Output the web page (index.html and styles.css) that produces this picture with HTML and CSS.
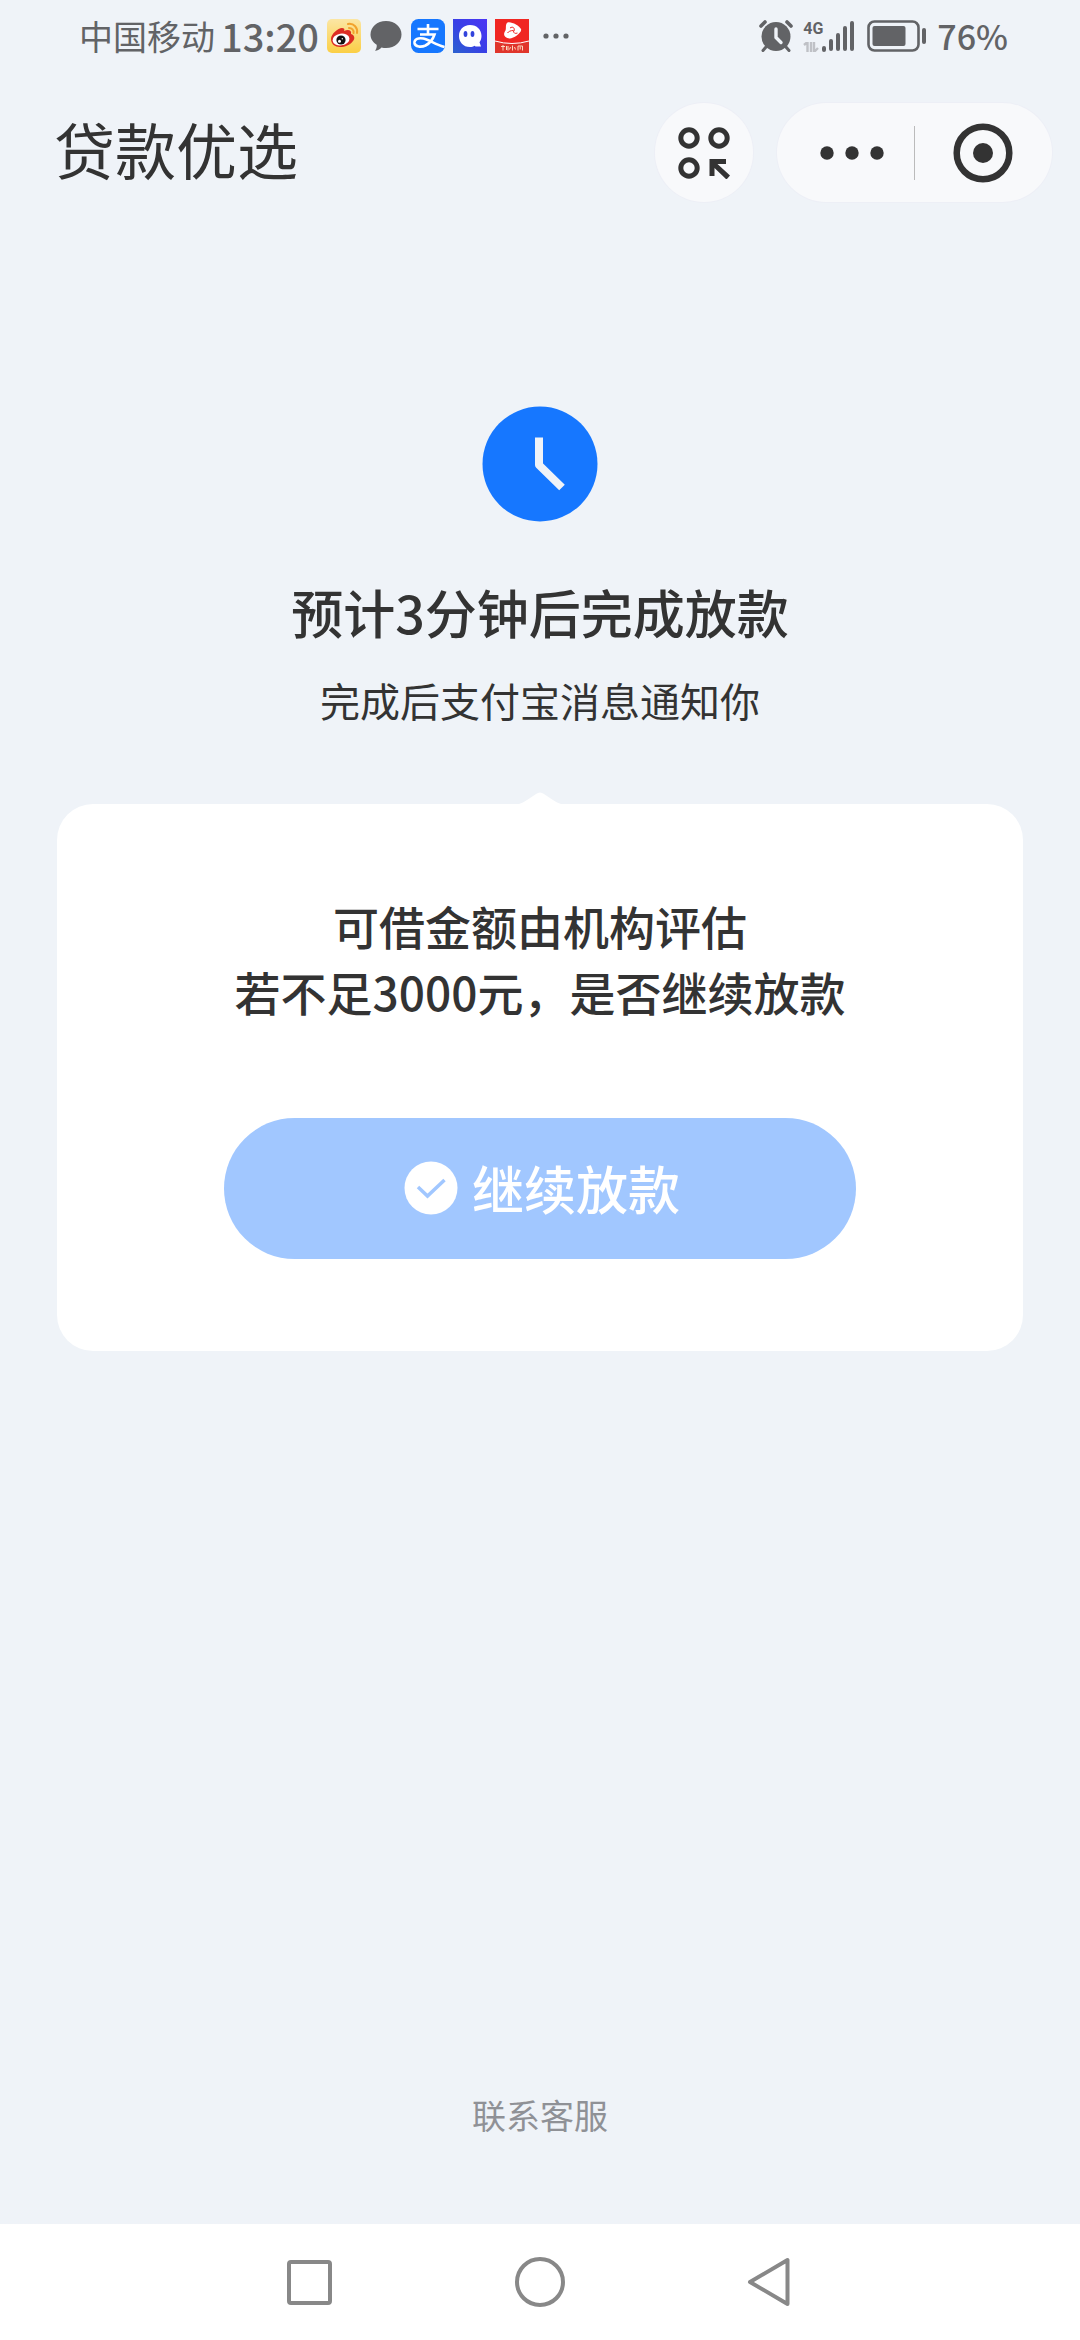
FILE: index.html
```html
<!DOCTYPE html>
<html lang="zh-CN">
<head>
<meta charset="utf-8">
<meta name="viewport" content="width=device-width, initial-scale=1">
<title>贷款优选</title>
<link rel="stylesheet" href="styles.css">
</head>
<body>
<div class="status-bar">
  <div class="status-left">
    <span class="carrier">中国移动</span>
    <span class="time">13:20</span>
    <div class="app-icons">
      <svg class="app-icon" viewBox="0 0 34 34" aria-hidden="true">
        <defs><linearGradient id="wb" x1="0" y1="0" x2="0" y2="1"><stop offset="0" stop-color="#fbe6a4"/><stop offset="1" stop-color="#fbcf45"/></linearGradient></defs>
        <rect width="34" height="34" rx="5" fill="url(#wb)"/>
        <path d="M4 20c0-5 7-11 11-11 2 0 3 1 2 3 4-2 8-1 7 3 4 1 4 5 2 7-3 4-8 6-13 6-5 0-9-3-9-8z" fill="#dc2d22"/>
        <ellipse cx="14" cy="20.500" rx="8.500" ry="5.800" fill="#fff" transform="rotate(-8 14 20.500)"/>
        <circle cx="14" cy="21" r="4.600" fill="#111"/><circle cx="12.500" cy="22.300" r="1.500" fill="#fff"/><circle cx="15.300" cy="19.800" r=".7" fill="#fff"/>
        <path d="M21 5c6-1 10 4 9 9M22 9c3 0 5 2 4.500 5" fill="none" stroke="#f2a22c" stroke-width="2" stroke-linecap="round"/>
      </svg>
      <svg class="app-icon" viewBox="0 0 34 34" aria-hidden="true">
        <path d="M17 2c9 0 15.500 6 15.500 13.500S26 29 17 29c-1.500 0-3-.2-4.500-.6-1.500 1.500-4 3.300-6.500 3.300 1.300-1.400 2-3.600 1.700-6C3.800 23.300 1.500 19.600 1.500 15.500 1.500 8 8 2 17 2z" fill="#626366"/>
      </svg>
      <svg class="app-icon" viewBox="0 0 34 34" aria-hidden="true">
        <rect width="34" height="34" rx="7.500" fill="#1677ff"/>
        <path d="M6.500 10h21M17 5v10.500M9 15.500h14.500c-1.500 4.500-5 9-9 11-4 1.800-10.500 1.500-11-2.500-.4-4 4-5.500 9-4.500 6 1.400 12 6 21 8.500" fill="none" stroke="#fff" stroke-width="2.600"/>
      </svg>
      <svg class="app-icon" viewBox="0 0 34 34" aria-hidden="true">
        <defs><linearGradient id="qb" x1="0" y1="1" x2="1" y2="0"><stop offset="0" stop-color="#2c62cf"/><stop offset=".5" stop-color="#393fe6"/><stop offset="1" stop-color="#4b35f5"/></linearGradient></defs>
        <rect width="34" height="34" fill="url(#qb)"/>
        <path d="M17 6c7 0 11.500 4.800 11.500 11 0 2.600-.8 4.700-2 6.300l1.500 4.200h-5.500l-.8-.8C20.300 27.600 18.700 28 17 28 10 28 6 23 6 17S10 6 17 6z" fill="#fff"/>
        <ellipse cx="12.500" cy="15" rx="1.900" ry="3" fill="#3344dc"/><ellipse cx="19.500" cy="15" rx="1.900" ry="3" fill="#3344dc"/>
      </svg>
      <svg class="app-icon" viewBox="0 0 34 34" aria-hidden="true">
        <rect width="34" height="34" fill="#f02622"/>
        <path d="M0 22q17 5 34 0v12H0z" fill="#e0352b"/><path d="M0 22q17 5 34 0" fill="none" stroke="#fff" stroke-width="1"/>
        <path d="M12.500 3.500c3-1.500 12 3 13.500 6.500 1.500 3.600-8 10-11.500 9.500-5-.5-7-3.500-4-8 1-2.500-.5-6 2-8z" fill="#fff"/>
        <path d="M15 9c3-2 5 0 4 3M18.500 11.500c-3 0-5 1-6 2.500M18.500 12c0 2 1.500 3 4 2" fill="none" stroke="#f02622" stroke-width="1"/>
        <path d="M6 27.500h4M8 26v5.500M11.500 27v4M13 27v4.500M17.500 26.500v5M15.500 28l-1 2.500M19.500 28l1 2.500M23 31.500V27h4.500v4.500M25.200 27.500v3" fill="none" stroke="#fbd9c0" stroke-width="1"/>
      </svg>
    </div>
    <svg class="more-dots" viewBox="0 0 26 6" aria-hidden="true"><g fill="#626366"><circle cx="3" cy="3" r="2.600"/><circle cx="13" cy="3" r="2.600"/><circle cx="23" cy="3" r="2.600"/></g></svg>
  </div>
  <div class="status-right">
    <svg class="alarm" viewBox="0 0 34 32" aria-hidden="true">
      <circle cx="17" cy="16.500" r="14.500" fill="#626366"/>
      <path d="M7 27l-3 3.500M27 27l3 3.500" stroke="#626366" stroke-width="3" stroke-linecap="round" fill="none"/>
      <path d="M-1 9L9-1M35 9L25-1" stroke="#eff3f8" stroke-width="4" fill="none"/>
      <path d="M2 6l4-4M32 6l-4-4" stroke="#626366" stroke-width="3.600" stroke-linecap="round" fill="none"/>
      <path d="M17 9v8.500l5 5" fill="none" stroke="#eff3f8" stroke-width="3.400" stroke-linecap="round" stroke-linejoin="round"/>
    </svg>
    <div class="network">
      <span class="network-type">4G</span>
      <svg class="arrows" viewBox="0 0 16 10" aria-hidden="true"><path d="M1 3l3.500-3v10M8 0v10M11 0v10l4-4" fill="none" stroke="#bfc1c6" stroke-width="2.400"/></svg>
    </div>
    <svg class="signal" viewBox="0 0 34 32" aria-hidden="true"><path d="M3 30v-2M10 29v-8M17 29V15M24 29V8M31 29V3" fill="none" stroke="#626366" stroke-width="4" stroke-linecap="round"/></svg>
    <svg class="battery" viewBox="0 0 60 32" aria-hidden="true">
      <rect x="1.500" y="1.500" width="50" height="29" rx="6" fill="none" stroke="#626366" stroke-width="2.600"/>
      <rect x="5.500" y="6" width="33" height="20" rx="2" fill="#626366"/>
      <rect x="55" y="8" width="4" height="16" rx="2" fill="#626366"/>
    </svg>
    <span class="percent">76%</span>
  </div>
</div>

<header class="app-header">
  <h1 class="app-title">贷款优选</h1>
  <div class="header-actions">
    <button class="round-button" type="button" aria-label="小程序">
      <svg class="grid-icon" viewBox="0 0 52 52" aria-hidden="true">
        <g fill="none" stroke="#333" stroke-width="5"><circle cx="11" cy="11" r="8.200"/><circle cx="41" cy="11" r="8.200"/><circle cx="11" cy="41" r="8.200"/></g>
        <path d="M31.500 32H48v5h-8.500L52 48.500l-3.500 4L36.500 41v8h-5z" fill="#333"/>
      </svg>
    </button>
    <div class="capsule">
      <button class="capsule-button capsule-more" type="button" aria-label="更多">
        <svg class="capsule-dots" viewBox="0 0 64 14" aria-hidden="true"><g fill="#333"><circle cx="7" cy="7" r="6.700"/><circle cx="32" cy="7" r="6.700"/><circle cx="57" cy="7" r="6.700"/></g></svg>
      </button>
      <button class="capsule-button" type="button" aria-label="关闭">
        <svg class="target" viewBox="0 0 60 60" aria-hidden="true"><circle cx="30" cy="30" r="26.300" fill="none" stroke="#333" stroke-width="6.500"/><circle cx="30" cy="30" r="10" fill="#333"/></svg>
      </button>
    </div>
  </div>
</header>

<main class="content">
  <svg class="clock" viewBox="0 0 116 116" aria-hidden="true">
    <circle cx="58" cy="58" r="57.500" fill="#1677ff"/>
    <path d="M57 31.500V59L80 81.500" fill="none" stroke="#eff3f8" stroke-width="8" stroke-linejoin="round"/>
  </svg>
  <h2 class="headline">预计3分钟后完成放款</h2>
  <p class="subline">完成后支付宝消息通知你</p>
  <section class="card">
    <svg class="card-arrow" viewBox="0 0 56 13" aria-hidden="true"><path d="M0 13C8 13 12 10 18 6L24 2Q28-1 32 2L38 6C44 10 48 13 56 13z" fill="#fff"/></svg>
    <p class="card-text">可借金额由机构评估<br>若不足3000元，是否继续放款</p>
    <button class="primary-button" type="button">
      <svg class="check" viewBox="0 0 54 54" aria-hidden="true"><circle cx="27" cy="27" r="26.500" fill="#fff"/><path d="M14 26l9.500 9L40.500 19" fill="none" stroke="#a1c7ff" stroke-width="3.500"/></svg>
      <span>继续放款</span>
    </button>
  </section>
  <a class="service-link" href="#">联系客服</a>
</main>

<nav class="system-nav" aria-label="系统导航">
  <button class="nav-button" type="button" aria-label="最近任务"><svg class="nav-icon" viewBox="0 0 52 52"><rect x="5" y="6" width="41" height="41" rx="2" fill="none" stroke="#888" stroke-width="4"/></svg></button>
  <button class="nav-button" type="button" aria-label="主屏幕"><svg class="nav-icon" viewBox="0 0 52 52"><circle cx="26" cy="26" r="23" fill="none" stroke="#888" stroke-width="4"/></svg></button>
  <button class="nav-button" type="button" aria-label="返回"><svg class="nav-icon" viewBox="0 0 52 52"><path d="M43.500 4v44L6 26z" fill="none" stroke="#888" stroke-width="4" stroke-linejoin="round"/></svg></button>
</nav>
</body>
</html>
```
FILE: styles.css
```css
* {
  box-sizing: border-box;
}

body {
  margin: 0;
  min-height: 100vh;
  display: flex;
  flex-direction: column;
  background: #eff3f8;
  color: #333;
  font-family: "Noto Sans CJK SC", sans-serif;
}

svg {
  display: block;
  flex: none;
}

h1, h2, p {
  margin: 0;
}

button {
  padding: 0;
  border: 0;
  background: none;
  font: inherit;
  color: inherit;
  cursor: pointer;
}

/* Status bar */
.status-bar {
  display: flex;
  justify-content: space-between;
  align-items: center;
  height: 72px;
  padding: 0 72px 0 79px;
  color: #626366;
  white-space: nowrap;
}

.status-left,
.status-right,
.app-icons {
  display: flex;
  align-items: center;
}

.carrier {
  font-size: 34px;
  line-height: 40px;
}

.time {
  margin: 0 8px 0 6px;
  font-size: 38px;
  font-weight: 500;
  line-height: 40px;
}

.app-icons {
  gap: 8px;
}

.app-icon {
  width: 34px;
  height: 34px;
}

.more-dots {
  width: 26px;
  height: 6px;
  margin-left: 14px;
}

.alarm {
  width: 34px;
  height: 32px;
}

.network {
  display: flex;
  flex-direction: column;
  gap: 4px;
  width: 18px;
  margin-left: 10px;
}

.network-type {
  font-family: Roboto, sans-serif;
  font-size: 16px;
  font-weight: 700;
  line-height: 18px;
}

.arrows {
  width: 16px;
  height: 10px;
}

.signal {
  width: 34px;
  height: 32px;
}

.battery {
  width: 60px;
  height: 32px;
  margin: 0 10px 0 12px;
}

.percent {
  font-size: 34px;
  font-weight: 500;
  line-height: 40px;
}

/* App header */
.app-header {
  display: flex;
  justify-content: space-between;
  align-items: center;
  padding: 31px 28px 0 54px;
}

.app-title {
  padding-bottom: 8px;
  font-size: 61px;
  font-weight: 400;
  line-height: 90px;
}

.header-actions {
  display: flex;
  gap: 24px;
}

.round-button,
.capsule {
  height: 99px;
  border-radius: 50px;
  background: #f8f9fb;
  box-shadow: 0 0 0 1px #edeff6;
}

.round-button {
  display: grid;
  place-items: center;
  width: 98px;
}

.grid-icon {
  width: 52px;
  height: 52px;
}

.capsule {
  display: grid;
  grid-template-columns: 1fr 1fr;
  align-items: center;
  width: 275px;
}

.capsule-button {
  display: grid;
  place-items: center;
}

.capsule-more {
  height: 54px;
  padding-left: 14px;
  border-right: 1px solid #bbb;
}

.target {
  width: 60px;
  height: 60px;
}

.capsule-dots {
  width: 64px;
  height: 14px;
}

/* Result and confirmation */
.content {
  flex: 1;
  display: flex;
  flex-direction: column;
  align-items: center;
  padding: 204px 57px 85px;
}

.clock {
  width: 116px;
  height: 116px;
}

.headline {
  margin-top: 54px;
  font-size: 52px;
  font-weight: 500;
  line-height: 72px;
}

.subline {
  margin-top: 24px;
  font-size: 40px;
  line-height: 56px;
}

.card {
  position: relative;
  display: flex;
  flex-direction: column;
  align-items: center;
  gap: 94px;
  width: 100%;
  margin-top: 76px;
  padding: 88px 40px 92px;
  border-radius: 36px;
  background: #fff;
}

.card-arrow {
  position: absolute;
  top: -12px;
  left: calc(50% - 28px);
  width: 56px;
  height: 13px;
}

.card-text {
  font-size: 46px;
  font-weight: 500;
  line-height: 66px;
  text-align: center;
}

.primary-button {
  display: flex;
  align-items: center;
  justify-content: center;
  gap: 14px;
  width: 100%;
  max-width: 632px;
  height: 141px;
  padding: 0 0 2px 4px;
  border-radius: 71px;
  background: #a1c7ff;
  color: #fff;
  font-size: 52px;
  font-weight: 500;
  line-height: 72px;
}

.check {
  width: 54px;
  height: 54px;
}

.service-link {
  margin-top: auto;
  color: #8f9196;
  font-size: 34px;
  line-height: 48px;
  text-decoration: none;
}

/* System navigation */
.system-nav {
  display: flex;
  justify-content: center;
  align-items: center;
  gap: 178px;
  height: 116px;
  background: #fff;
}

.nav-icon {
  width: 52px;
  height: 52px;
}
```
